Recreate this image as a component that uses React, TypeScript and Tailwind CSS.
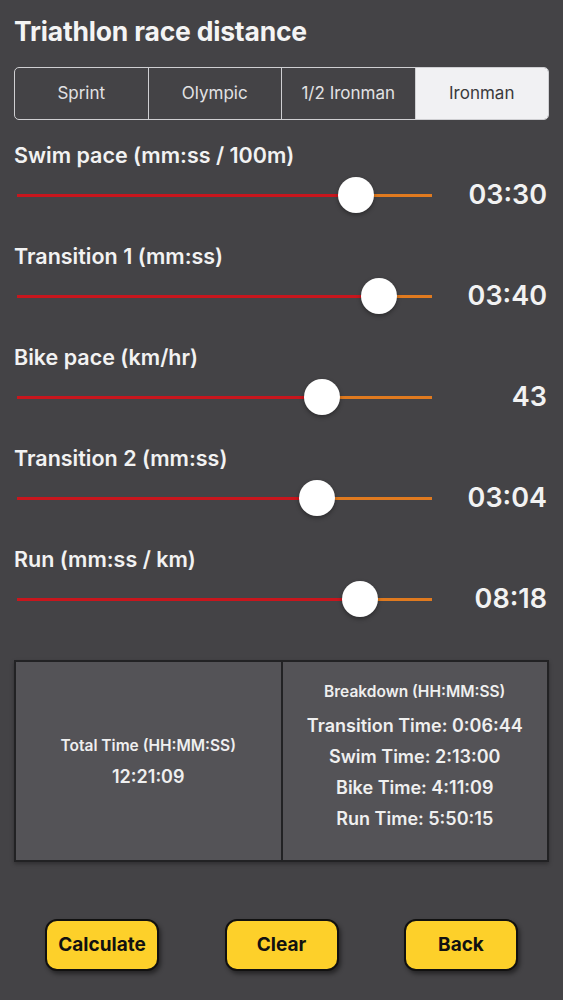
import React from "react";

const distances = ["Sprint", "Olympic", "1/2 Ironman", "Ironman"];

const sliders = [
  { label: "Swim pace (mm:ss / 100m)", value: "03:30", pos: 339 },
  { label: "Transition 1 (mm:ss)", value: "03:40", pos: 362 },
  { label: "Bike pace (km/hr)", value: "43", pos: 305 },
  { label: "Transition 2 (mm:ss)", value: "03:04", pos: 300 },
  { label: "Run (mm:ss / km)", value: "08:18", pos: 343 },
];

function Slider({ pos }: { pos: number }) {
  return (
    <div className="relative h-10 w-[415px] flex-none">
      <div className="absolute left-0 top-[19px] h-[3px] bg-[#c8161d]" style={{ width: pos }} />
      <div className="absolute right-0 top-[19px] h-[3px] bg-[#e07a1f]" style={{ left: pos }} />
      <div
        className="absolute top-[2px] h-9 w-9 rounded-full bg-white shadow-[0_2px_4px_rgba(0,0,0,0.35)]"
        style={{ left: pos - 18 }}
      />
    </div>
  );
}

export default function App() {
  return (
    <div
      className="min-h-[1000px] w-full bg-[#444346] text-white"
      style={{ fontFamily: "Inter, 'Noto Sans', sans-serif" }}
    >
      <div className="px-[14px] pt-[15px]">
        <h1 className="text-[26.5px] font-bold leading-8 tracking-[-0.2px] text-[#f4f4f4]">
          Triathlon race distance
        </h1>

        <div className="mt-5 flex h-[53px] w-[535px] overflow-hidden rounded-[5px] border border-[#cfcfd2]">
          {distances.map((d, i) => (
            <div
              key={d}
              className={
                i === 3
                  ? "flex flex-1 items-center justify-center bg-[#f1f1f3] text-[17px] text-[#3a3a3c]"
                  : "flex flex-1 items-center justify-center border-r border-[#cfcfd2] text-[17px] text-[#e2e2e4]"
              }
            >
              {d}
            </div>
          ))}
        </div>

        <div className="mt-[23px] flex flex-col gap-[29px]">
          {sliders.map((s) => (
            <div key={s.label}>
              <div className="text-[21.5px] font-semibold leading-6 text-[#f2f2f2]">{s.label}</div>
              <div className="mt-2 flex h-10 items-center">
                <div className="ml-[3px]">
                  <Slider pos={s.pos} />
                </div>
                <div className="flex-1 pr-[2px] text-right text-[27px] font-semibold leading-10 text-[#f2f2f2]">
                  {s.value}
                </div>
              </div>
            </div>
          ))}
        </div>

        <div className="mt-[41px] flex h-[202px] w-[535px] border-2 border-[#222224] bg-[#545357] shadow-[0_2px_4px_rgba(0,0,0,0.3)]">
          <div className="flex flex-1 flex-col items-center justify-center gap-[6px] border-r-2 border-[#222224] pt-[2px]">
            <div className="text-[15.5px] font-semibold text-[#efefef]">Total Time (HH:MM:SS)</div>
            <div className="text-[18px] font-semibold text-[#efefef]">12:21:09</div>
          </div>
          <div className="flex flex-1 flex-col items-center justify-center pb-[8px] text-[#efefef]">
            <div className="mb-[6px] text-[15.5px] font-semibold leading-6">Breakdown (HH:MM:SS)</div>
            <div className="text-[18px] font-semibold leading-[31px]">Transition Time: 0:06:44</div>
            <div className="text-[18px] font-semibold leading-[31px]">Swim Time: 2:13:00</div>
            <div className="text-[18px] font-semibold leading-[31px]">Bike Time: 4:11:09</div>
            <div className="text-[18px] font-semibold leading-[31px]">Run Time: 5:50:15</div>
          </div>
        </div>

        <div className="mt-[57px] flex justify-between px-[31px]">
          {["Calculate", "Clear", "Back"].map((b) => (
            <button
              key={b}
              className="flex h-[52px] w-[114px] items-center justify-center rounded-[12px] border-2 border-[#111] bg-[#fdd02a] text-[19px] font-bold text-[#111] shadow-[2px_3px_4px_rgba(0,0,0,0.45)]"
            >
              {b}
            </button>
          ))}
        </div>
      </div>
    </div>
  );
}
